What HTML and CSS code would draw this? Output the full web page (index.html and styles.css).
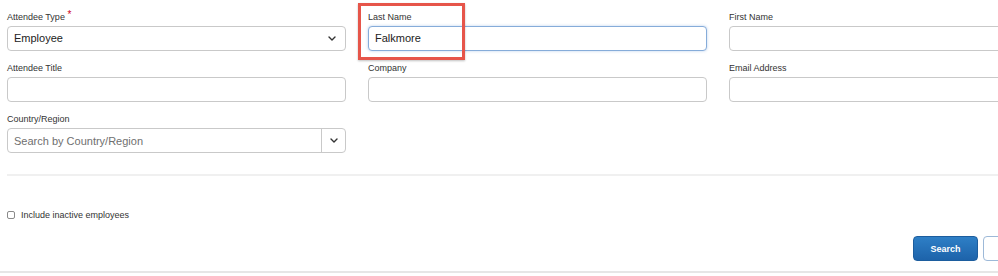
FILE: index.html
```html
<!DOCTYPE html>
<html lang="en">
<head>
<meta charset="utf-8">
<title>Attendee Search</title>
<link rel="stylesheet" href="styles.css">
</head>
<body>
<div class="page">
  <form class="form">
    <div class="grid">
      <div class="field">
        <label class="label">Attendee Type <span class="req">*</span></label>
        <div class="control select">
          <span class="value">Employee</span>
          <svg class="chev" width="8" height="5" viewBox="0 0 8 5"><path d="M1 1l3 3 3-3" fill="none" stroke="#333" stroke-width="1.4" stroke-linecap="round" stroke-linejoin="round"/></svg>
        </div>
      </div>
      <div class="field">
        <label class="label">Last Name</label>
        <div class="control focus"><span class="value">Falkmore</span></div>
        <div class="annot"></div>
      </div>
      <div class="field">
        <label class="label">First Name</label>
        <div class="control"></div>
      </div>
      <div class="field">
        <label class="label">Attendee Title</label>
        <div class="control"></div>
      </div>
      <div class="field">
        <label class="label">Company</label>
        <div class="control"></div>
      </div>
      <div class="field">
        <label class="label">Email Address</label>
        <div class="control"></div>
      </div>
      <div class="field">
        <label class="label">Country/Region</label>
        <div class="control combo">
          <span class="value placeholder">Search by Country/Region</span>
          <span class="combo-btn">
            <svg width="8" height="5" viewBox="0 0 8 5"><path d="M1 1l3 3 3-3" fill="none" stroke="#333" stroke-width="1.4" stroke-linecap="round" stroke-linejoin="round"/></svg>
          </span>
        </div>
      </div>
    </div>
    <div class="sep"></div>
    <label class="check"><span class="box"></span><span>Include inactive employees</span></label>
    <div class="actions">
      <button type="button" class="btn primary">Search</button>
      <button type="button" class="btn secondary" aria-label="Clear"></button>
    </div>
  </form>
  <div class="bottom-line"></div>
</div>
</body>
</html>
```
FILE: styles.css
```css
html, body {
  margin: 0;
  padding: 0;
  background: #fff;
  overflow: hidden;
}
body {
  font-family: "Liberation Sans", Arial, sans-serif;
  color: #333;
  width: 998px;
  height: 276px;
}
.page {
  width: 1068px;
}
.form {
  padding: 11px 0 0 7px;
}
.grid {
  display: grid;
  grid-template-columns: 339px 339px 339px;
  column-gap: 22px;
  row-gap: 11px;
}
.field {
  position: relative;
  display: flex;
  flex-direction: column;
  gap: 3px;
}
.label {
  font-size: 9px;
  line-height: 12px;
  color: #333;
  height: 12px;
}
.req {
  color: #d0021b;
  font-size: 10px;
  position: relative;
  top: -2px;
}
.control {
  box-sizing: border-box;
  height: 25px;
  border: 1px solid #c9c9c9;
  border-radius: 4px;
  background: #fff;
  display: flex;
  align-items: center;
  padding: 0 0 1px 6px;
}
.value {
  font-size: 11px;
  color: #222;
}
.placeholder {
  color: #6f6f6f;
}
.select {
  justify-content: space-between;
  padding-right: 9px;
}
.focus {
  border-color: #86acd9;
  box-shadow: 0 0 3px rgba(102, 150, 215, 0.45);
}
.combo {
  justify-content: space-between;
  padding-right: 0;
  padding-bottom: 0;
}
.combo-btn {
  width: 23px;
  height: 100%;
  border-left: 1px solid #c9c9c9;
  display: flex;
  align-items: center;
  justify-content: center;
}
.annot {
  position: absolute;
  left: -10px;
  top: -8px;
  width: 107px;
  height: 57px;
  box-sizing: border-box;
  border: 3px solid #e6554a;
  box-shadow: 0 1px 2px rgba(0, 0, 0, 0.25);
  pointer-events: none;
}
.sep {
  height: 2px;
  background: #f0f0f0;
  margin-top: 21px;
}
.check {
  display: flex;
  align-items: center;
  gap: 6px;
  margin-top: 33px;
  font-size: 9px;
  line-height: 12px;
  color: #333;
}
.box {
  width: 8px;
  height: 8px;
  border: 1px solid #8a8a8a;
  border-radius: 2px;
  box-sizing: border-box;
  background: #fff;
}
.actions {
  display: flex;
  justify-content: flex-end;
  gap: 5px;
  margin-top: 15px;
}
.btn {
  box-sizing: border-box;
  height: 25px;
  border-radius: 4px;
  font-family: "Liberation Sans", Arial, sans-serif;
  font-size: 9px;
  font-weight: bold;
  padding: 0;
}
.primary {
  width: 65px;
  color: #fff;
  border: 1px solid #1c5d9e;
  background: linear-gradient(#2e7fc6, #1d63aa);
}
.secondary {
  width: 85px;
  color: #1d63aa;
  border: 1px solid #9db9d8;
  background: #fff;
}
.bottom-line {
  margin-top: 10px;
  height: 2px;
  background: #e6e6e6;
}
```
